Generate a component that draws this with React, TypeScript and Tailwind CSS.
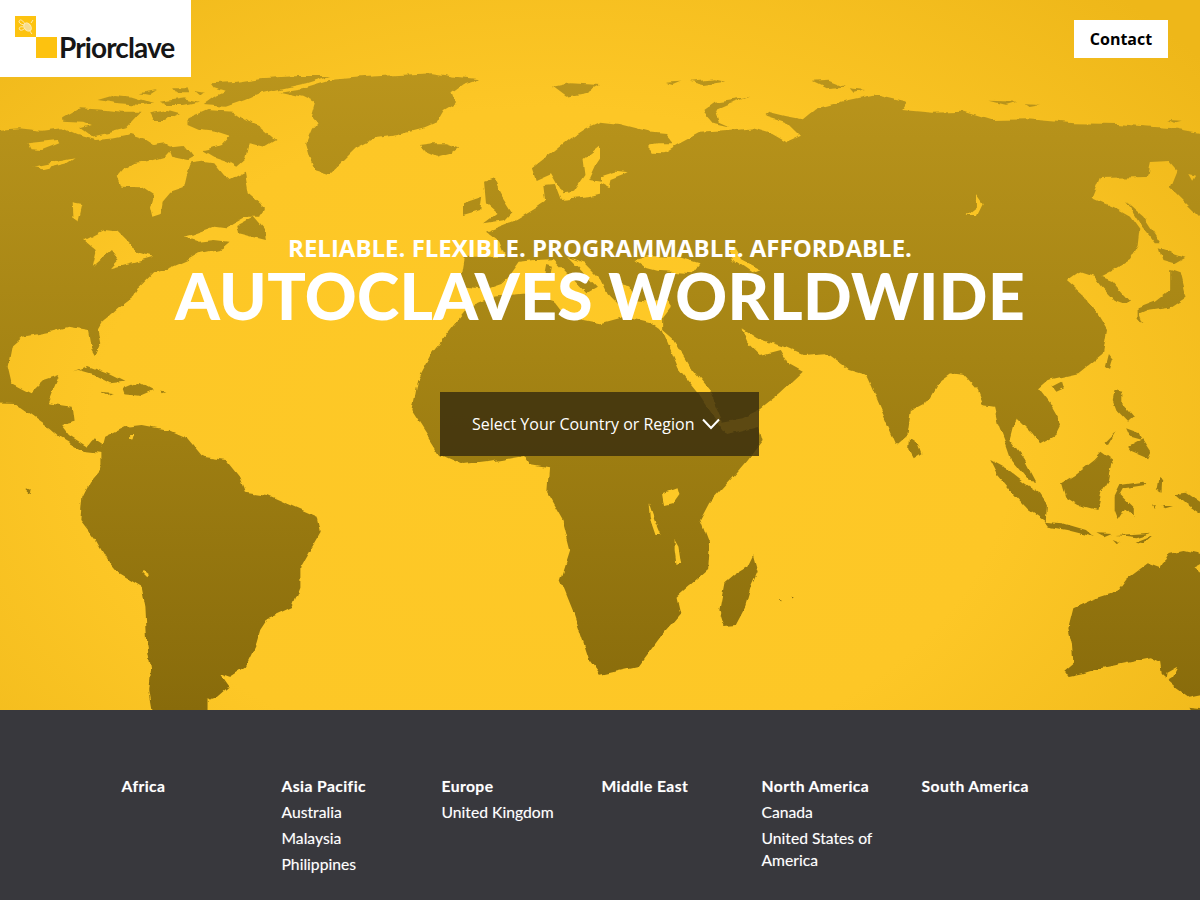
const A = [
  "-30,212 50,205 110,212 160,205 200,225 250,240 300,235 340,225 380,240 400,255 430,250 450,265 430,290 400,300 350,310 320,330 305,350 315,380 370,382 400,405 392,440 398,470 420,462 425,425 445,398 480,385 488,345 500,310 530,305 560,310 585,345 600,360 640,335 650,400 690,440 680,470 640,470 610,490 590,505 560,500 500,525 480,530 520,545 560,540 600,545 580,565 520,580 490,600 440,625 400,640 365,680 350,710 310,745 265,790 255,810 262,850 250,885 238,860 230,810 180,800 130,815 60,830 30,860 20,920 30,970 80,1000 115,960 155,945 135,1000 125,1030 190,1040 195,1085 160,1095 180,1125 228,1160 245,1135 265,1150 270,1180 262,1178 215,1172 160,1135 130,1105 75,1060 40,1032 -30,1030",
  "730,95 790,85 860,60 960,50 1040,45 1130,40 1190,50 1255,58 1210,75 1180,100 1190,130 1160,150 1140,190 1110,205 1040,225 980,235 930,265 890,310 860,342 825,330 810,290 800,250 815,210 830,190 815,170 825,130 790,110",
  "1095,255 1130,250 1170,250 1200,262 1180,278 1140,290 1110,275",
  "550,70 620,65 680,55 780,48 860,48 800,70 740,85 680,100 640,120 590,140 530,135 560,110 590,95 560,85",
  "490,175 540,150 610,155 640,180 680,200 720,240 690,260 650,250 640,300 620,320 590,300 540,270 580,255 600,230 560,215 520,210 490,195",
  "165,175 210,145 280,150 320,155 370,155 350,180 330,205 280,220 240,230 210,205 240,195 220,185 165,182",
  "255,120 300,105 345,110 400,130 370,135 310,130",
  "365,100 410,90 390,105",
  "450,85 490,85 495,100 460,100",
  "510,90 535,95 525,105",
  "390,160 440,150 470,160 430,180 400,180",
  "420,125 480,115 520,125 480,135 440,135",
  "440,260 480,255 505,290 490,300 450,290",
  "530,270 590,265 630,290 610,310 560,290",
  "620,495 660,470 690,510 695,540 660,530 625,520",
  "190,935 230,918 280,940 325,965 290,970 250,945 205,930",
  "320,985 360,965 400,990 370,1005 325,1000",
  "265,995 295,1000 275,1005",
  "415,995 435,997 420,1003",
  "1265,365 1290,355 1310,400 1340,455 1320,480 1265,490 1300,460 1270,430",
  "1210,430 1260,410 1255,450 1210,465",
  "1445,80 1490,70 1568,75 1530,100 1480,110",
  "1390,325 1440,280 1490,235 1530,205 1568,185 1620,192 1700,215 1700,640 1620,640 1590,680 1530,610 1485,592 1560,680 1530,700 1480,640 1445,598 1400,600 1358,605 1330,650 1310,672 1265,690 1200,680 1205,640 1212,590 1320,590 1305,545 1270,515 1350,480 1400,445 1425,425 1420,378 1450,375 1465,420 1540,412 1600,395 1590,375 1645,340 1600,335 1570,365 1540,360 1560,310 1580,275 1568,260 1525,300 1530,345 1500,395 1470,400 1440,340 1400,360",
  "1090,960 1125,885 1190,790 1225,740 1290,710 1380,700 1450,725 1480,770 1568,790 1630,770 1700,790 1733,815 1773,925 1823,995 1868,1075 1893,1115 1900,1125 1983,1100 1993,1140 1953,1200 1908,1260 1853,1330 1830,1380 1853,1450 1848,1530 1768,1610 1778,1660 1733,1720 1668,1820 1568,1845 1540,1800 1500,1660 1465,1560 1490,1470 1470,1380 1430,1300 1435,1225 1385,1215 1370,1188 1280,1205 1210,1215 1150,1185 1120,1130 1075,1050",
  "1430,615 1445,620 1440,650 1425,645",
  "1490,695 1530,705 1510,722",
];
const B = [
  "0,400 0,190 60,210 110,215 170,222 190,250 150,250 125,255 135,278 165,280 200,255 260,218 340,212 400,205 450,222 490,248 525,230 485,185 430,165 440,155 485,168 530,178 565,145 640,122 720,103 805,125 790,150 870,158 950,155 1020,180 1120,178 1240,190 1350,192 1440,200 1500,205 1568,219 1620,225 1620,475 1568,471 1489,381 1507,330 1489,306 1437,309 1429,351 1306,354 1285,414 1340,441 1385,470 1410,510 1405,560 1385,600 1340,630 1310,648 1340,662 1385,722 1375,735 1345,722 1310,680 1290,650 1250,635 1220,660 1260,700 1275,730 1300,762 1325,810 1315,880 1250,940 1170,960 1145,985 1175,1030 1205,1090 1190,1125 1150,1150 1130,1120 1090,1075 1080,1095 1070,1140 1110,1200 1140,1265 1120,1262 1075,1200 1060,1150 1040,1090 1030,1040 1000,1035 985,990 950,945 915,940 890,960 860,1020 810,1050 800,1130 775,1155 750,1090 705,970 695,945 650,930 590,880 530,885 480,860 410,835 370,805 385,845 420,885 470,870 490,910 530,935 470,1000 415,1050 370,1075 320,1085 318,1075 290,1000 240,930 190,835 165,810 165,770 185,740 170,715 130,725 90,720 80,680 45,670 50,735 20,700 0,650",
  "1375,425 1420,470 1465,550 1450,550 1410,490",
  "1490,630 1515,640 1530,710 1490,740 1430,750 1410,760 1420,790 1405,770 1405,745 1450,725 1490,690",
  "1460,565 1530,590 1500,610 1470,600",
  "1180,980 1205,965 1210,985 1190,995",
  "1330,885 1340,900 1332,930 1322,920",
  "270,150 300,125 390,110 340,130 300,150 310,185 340,200 300,190",
  "555,65 600,62 640,80 590,85",
  "650,85 690,90 660,98",
  "170,68 210,65 190,75",
  "235,65 300,58 330,65 270,75",
  "1015,122 1090,125 1060,135",
  "1110,130 1150,132 1120,138",
  "1485,180 1520,182 1500,188",
];
const C = [
  "265,215 275,170 330,140 370,135 440,150 490,175 530,230 590,240 625,290 640,335 700,345 760,375 830,410 838,455 810,510 785,560 785,620 765,680 700,715 680,750 670,790 640,860 600,890 575,880 600,920 570,950 545,960 545,1000 400,1000 390,930 395,870 385,800 380,680 370,620 310,580 280,540 250,480 210,420 215,350 235,305 265,265",
  "70,325 80,330 78,345 70,342",
];
const D = [
  "400,525 412,575 395,620 380,680 355,735 325,738 312,690 325,610 350,585 385,560",
  "810,175 830,190 840,220 820,235 808,210",
  "1345,30 1365,35 1365,70 1395,110 1380,125 1350,90 1340,60",
  "1380,200 1420,175 1440,210 1430,235 1390,215",
  "1375,145 1410,160 1415,180 1385,170",
  "1315,190 1345,155 1325,195",
  "1205,310 1240,285 1290,240 1310,215 1340,240 1330,300 1310,340 1300,390 1250,375 1215,350",
  "1020,240 1060,265 1110,310 1150,340 1168,370 1165,425 1120,390 1080,340 1040,285",
  "1160,425 1210,430 1270,450 1290,470 1220,450 1170,440",
  "1345,350 1360,315 1420,305 1425,315 1370,325 1360,345 1395,385 1395,410 1375,385 1355,420 1345,390",
  "1300,460 1340,462 1320,472",
  "1350,465 1440,458 1400,472",
  "1340,480 1360,490 1350,492",
  "1400,485 1445,465 1420,490",
  "1500,340 1530,335 1568,365 1568,400 1530,370",
  "1460,290 1472,300 1470,335 1455,325",
  "1440,380 1450,378 1445,390",
  "1470,378 1500,378 1480,385",
  "1211,875 1237,850 1233,790 1224,745 1237,685 1289,658 1350,635 1376,595 1429,550 1464,565 1485,520 1525,510 1580,525 1580,940 1538,950 1507,925 1468,885 1464,850 1437,835 1350,855 1307,865 1263,880 1228,888",
  "1538,980 1580,985 1580,1000 1545,995",
  "470,662 478,665 473,670",
  "500,650 506,652 502,658",
];
const holesA = [
  "72,250 150,240 155,250 110,270 80,268",
  "85,320 195,295 175,310 110,328",
  "190,430 215,435 205,485 192,475",
  "220,540 270,510 310,515 340,550 355,575 400,590 340,610 290,625 310,600 290,570 260,600 240,620 250,570 225,545",
];
const holesB = [
  "90,600 130,588 208,592 260,610 240,640 150,632 115,622",
  "330,560 350,600 400,640 420,630 370,600 350,560",
  "985,405 1000,430 985,465 958,465 985,440",
  "0,350 40,335 75,340 30,360 25,385 0,370",
  "1540,345 1558,350 1550,365",
];
const holesD = [
  "165,340 200,325 205,345 190,370 170,375",
  "127,370 145,430 158,465 145,465 130,415",
  "195,480 205,500 212,555 200,555 195,510",
  "1511,860 1481,880 1477,905 1498,890",
  "1550,560 1575,545 1575,585",
];
const holesC = ["375,570 392,585 385,595 372,580", "340,165 352,165 348,182 340,178"];

const frames: [string, string[], string[]][] = [
  ["translate(0,60) scale(.38265,.33333)", A, holesA],
  ["translate(600,60) scale(.38265,.33333)", B, holesB],
  ["translate(0,380) scale(.38265,.33333)", C, holesC],
  ["translate(600,380) scale(.38265,.33333)", D, holesD],
];

function WorldMap() {
  return (
    <svg className="absolute inset-0" width="1200" height="710" viewBox="0 0 1200 710">
      <defs>
        <linearGradient id="landFill" x1="0" y1="70" x2="0" y2="710" gradientUnits="userSpaceOnUse">
          <stop offset="0" stopColor="#ba951c" />
          <stop offset="0.45" stopColor="#a58414" />
          <stop offset="1" stopColor="#886b0b" />
        </linearGradient>
        <filter id="rough" filterUnits="userSpaceOnUse" x="-10" y="-10" width="1220" height="730">
          <feTurbulence type="fractalNoise" baseFrequency="0.07" numOctaves="3" seed="4" result="n" />
          <feDisplacementMap in="SourceGraphic" in2="n" scale="6" xChannelSelector="R" yChannelSelector="G" />
        </filter>
        <mask id="landMask" maskUnits="userSpaceOnUse" x="0" y="0" width="1200" height="710">
          <g filter="url(#rough)">
            {frames.map(([t, land], i) => (
              <g key={i} transform={t} fill="#fff">
                {land.map((p, j) => <polygon key={j} points={p} />)}
              </g>
            ))}
            {frames.map(([t, , holes], i) => (
              <g key={i} transform={t} fill="#000">
                {holes.map((p, j) => <polygon key={j} points={p} />)}
              </g>
            ))}
          </g>
        </mask>
      </defs>
      <rect x="0" y="0" width="1200" height="710" fill="url(#landFill)" mask="url(#landMask)" />
    </svg>
  );
}

function Logo() {
  return (
    <div className="w-[191px] h-[77px] bg-white flex shrink-0 relative z-10">
      <div className="ml-[15px] mt-4 w-[42px] h-[42px] grid grid-cols-2 grid-rows-2">
        <div className="bg-[#fdc310]">
          <svg width="21" height="21" viewBox="0 0 21 21" fill="none" stroke="#fdeab0" strokeWidth="1">
            <ellipse cx="12.5" cy="11" rx="3.2" ry="4.5" transform="rotate(-40 12.5 11)" fill="#f6dc8e" />
            <path d="M10 8 C7 3 4 3 4 6 C5 8 8 9 10 9 M8.5 11 C5 10 3 12 5 14 C7 15 9 13 10 12 M14 14 L17 18 M16 7 L18 4" />
          </svg>
        </div>
        <div />
        <div />
        <div className="bg-[#fdc20f]" />
      </div>
      <span className="ml-[2px] mt-[29px] h-[37px] text-[28px] leading-[37px] font-bold tracking-[-0.9px] text-[#161616] font-['Lato',sans-serif]">Priorclave</span>
    </div>
  );
}

const regions: { name: string; items: string[] }[] = [
  { name: "Africa", items: [] },
  { name: "Asia Pacific", items: ["Australia", "Malaysia", "Philippines"] },
  { name: "Europe", items: ["United Kingdom"] },
  { name: "Middle East", items: [] },
  { name: "North America", items: ["Canada", "United States of America"] },
  { name: "South America", items: [] },
];

export default function App() {
  return (
    <div className="w-[1200px] h-[900px] overflow-hidden flex flex-col font-['Open_Sans',sans-serif]">
      <section className="relative h-[710px] shrink-0 flex flex-col bg-[radial-gradient(ellipse_70%_85%_at_46%_62%,#fec926_0%,#fdc726_55%,#eeb719_100%)]">
        <WorldMap />
        <header className="relative flex justify-between items-start">
          <Logo />
          <a className="mt-5 mr-8 w-[94px] h-[38px] bg-white text-black text-base font-bold flex items-center justify-center">Contact</a>
        </header>
        <div className="relative flex flex-col items-center mt-[157px]">
          <p className="text-2xl leading-7 font-bold text-white text-center">RELIABLE. FLEXIBLE. PROGRAMMABLE. AFFORDABLE.</p>
          <h1 className="mt-[7px] text-[64px] leading-[54px] font-black tracking-[0.35px] text-white text-center font-['Lato',sans-serif]">AUTOCLAVES WORLDWIDE</h1>
          <button className="mt-[69px] mr-px w-[319px] h-16 pl-8 bg-[rgba(52,41,14,0.8)] text-white text-base flex items-center gap-[7px]">
            Select Your Country or Region
            <svg width="20" height="12" viewBox="0 0 20 12" fill="none" stroke="#fff" strokeWidth="2"><path d="M2 1.5 L10 10 L18 1.5" /></svg>
          </button>
        </div>
      </section>
      <footer className="flex-1 bg-[#38383d] pt-[65px] pl-[121.5px]">
        <div className="grid grid-cols-[repeat(6,160px)] font-['Lato',sans-serif] text-white text-[15.7px] leading-[22px] [text-shadow:0_0_1px_rgba(255,255,255,0.35)]">
          {regions.map((r) => (
            <div key={r.name} className="pr-6">
              <h3 className="font-bold tracking-[0.4px]">{r.name}</h3>
              <ul>
                {r.items.map((it) => <li key={it} className="mt-1">{it}</li>)}
              </ul>
            </div>
          ))}
        </div>
      </footer>
    </div>
  );
}
